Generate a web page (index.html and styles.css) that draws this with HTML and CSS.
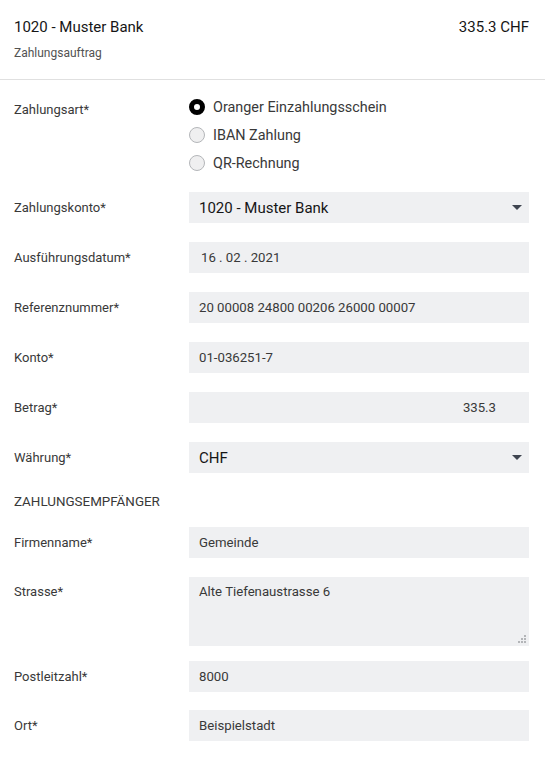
FILE: index.html
```html
<!DOCTYPE html>
<html lang="de">
<head>
<meta charset="utf-8">
<title>Zahlungsauftrag</title>
<link rel="stylesheet" href="styles.css">
</head>
<body>
<header class="head">
  <div class="head-row">
    <span class="title">1020 - Muster Bank</span>
    <span class="amount">335.3 CHF</span>
  </div>
  <div class="sub">Zahlungsauftrag</div>
</header>
<form class="form">
  <div class="row row-radio">
    <div class="label label-top">Zahlungsart*</div>
    <div class="radios">
      <div class="radio"><span class="dot checked"></span><span>Oranger Einzahlungsschein</span></div>
      <div class="radio"><span class="dot"></span><span>IBAN Zahlung</span></div>
      <div class="radio"><span class="dot"></span><span>QR-Rechnung</span></div>
    </div>
  </div>
  <div class="row">
    <div class="label">Zahlungskonto*</div>
    <div class="field select">1020 - Muster Bank<span class="caret"></span></div>
  </div>
  <div class="row">
    <div class="label">Ausführungsdatum*</div>
    <div class="field date">16 . 02 . 2021</div>
  </div>
  <div class="row">
    <div class="label">Referenznummer*</div>
    <div class="field">20 00008 24800 00206 26000 00007</div>
  </div>
  <div class="row">
    <div class="label">Konto*</div>
    <div class="field">01-036251-7</div>
  </div>
  <div class="row">
    <div class="label">Betrag*</div>
    <div class="field number">335.3</div>
  </div>
  <div class="row">
    <div class="label">Währung*</div>
    <div class="field select">CHF<span class="caret"></span></div>
  </div>
  <div class="section">ZAHLUNGSEMPFÄNGER</div>
  <div class="row">
    <div class="label">Firmenname*</div>
    <div class="field">Gemeinde</div>
  </div>
  <div class="row row-area">
    <div class="label label-area">Strasse*</div>
    <div class="field area">Alte Tiefenaustrasse 6
      <svg class="grip" width="8" height="8" viewBox="0 0 8 8"><rect x="6" y="0" width="2" height="2"/><rect x="6" y="3" width="2" height="2"/><rect x="3" y="3" width="2" height="2"/><rect x="0" y="6" width="2" height="2"/><rect x="3" y="6" width="2" height="2"/><rect x="6" y="6" width="2" height="2"/></svg>
    </div>
  </div>
  <div class="row row-plz">
    <div class="label">Postleitzahl*</div>
    <div class="field">8000</div>
  </div>
  <div class="row">
    <div class="label">Ort*</div>
    <div class="field">Beispielstadt</div>
  </div>
</form>
</body>
</html>
```

FILE: styles.css
```css
* { box-sizing: border-box; }
body {
  margin: 0;
  font-family: Roboto, "Noto Sans", sans-serif;
  color: #161616;
  background: #ffffff;
}
.head {
  padding: 16px 16px 18px 14px;
  border-bottom: 1px solid #e0e0e0;
}
.head-row {
  display: flex;
  justify-content: space-between;
  font-size: 15px;
  line-height: 22px;
  color: #161616;
}
.sub {
  margin-top: 7px;
  font-size: 12px;
  line-height: 16px;
  color: #525252;
}
.form {
  padding: 12px 16px 0 14px;
}
.row {
  display: grid;
  grid-template-columns: 175px 1fr;
  align-items: center;
  margin-bottom: 19px;
}
.row-radio {
  align-items: start;
  margin-bottom: 16px;
}
.label {
  font-size: 13px;
  line-height: 18px;
  color: #393939;
}
.label-top { padding-top: 9px; }
.radios {
  display: flex;
  flex-direction: column;
}
.radio {
  display: flex;
  align-items: center;
  gap: 8px;
  height: 28px;
  padding-top: 2px;
  font-size: 14.4px;
  color: #393939;
}
.dot {
  width: 16px;
  height: 16px;
  border-radius: 50%;
  background: #efeff0;
  border: 1px solid #b4b6b9;
  flex: none;
}
.dot.checked {
  background: #ffffff;
  border: 5px solid #000000;
}
.field {
  position: relative;
  height: 31px;
  background: #eff0f2;
  padding: 0 10px;
  display: flex;
  align-items: center;
  font-size: 13.2px;
  color: #393939;
}
.select {
  font-size: 15px;
  color: #161616;
}
.date { padding-left: 12px; }
.number {
  justify-content: flex-end;
  padding-right: 33px;
}
.caret {
  position: absolute;
  right: 7px;
  top: 13px;
  width: 0;
  height: 0;
  border-left: 5px solid transparent;
  border-right: 5px solid transparent;
  border-top: 5px solid #3f4550;
}
.section {
  font-size: 13.4px;
  line-height: 20px;
  color: #393939;
  margin-bottom: 15px;
}
.row-area {
  align-items: start;
  margin-bottom: 15px;
}
.label-area { padding-top: 6px; }
.area {
  height: 69px;
  align-items: flex-start;
  padding-top: 7px;
}
.grip {
  position: absolute;
  right: 3px;
  bottom: 3px;
  fill: #b3b5b8;
}
.row-plz { margin-bottom: 18px; }
```
